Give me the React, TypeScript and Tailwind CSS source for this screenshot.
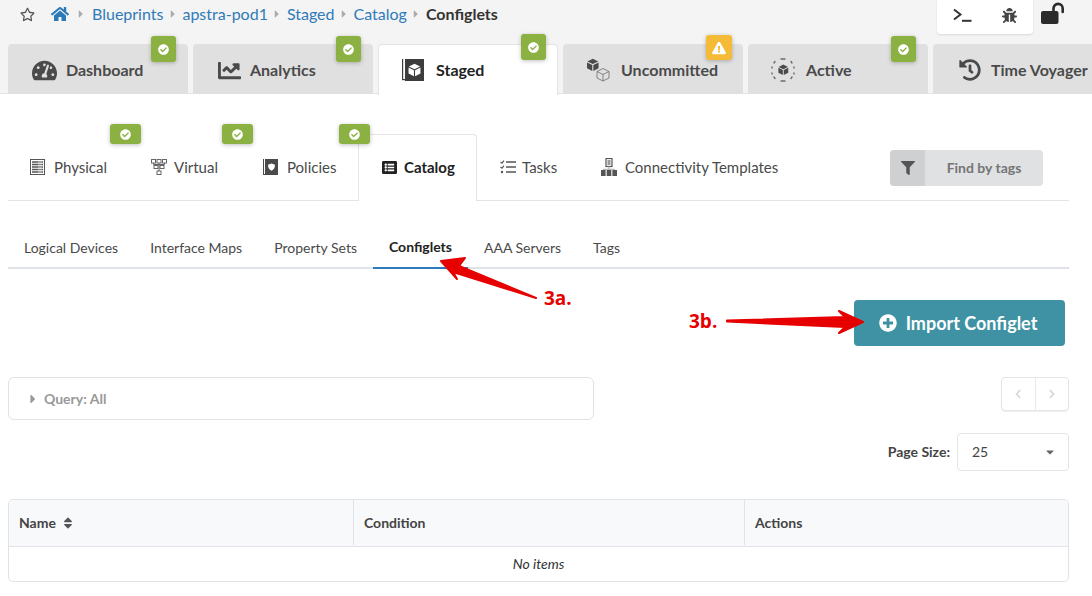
import type { ReactNode } from "react";
import {
  FaBug,
  FaCaretDown,
  FaCaretRight,
  FaChartLine,
  FaCheckCircle,
  FaChevronLeft,
  FaChevronRight,
  FaExclamationTriangle,
  FaFilter,
  FaHistory,
  FaHome,
  FaListAlt,
  FaPlusCircle,
  FaRegStar,
  FaSort,
  FaTachometerAlt,
} from "react-icons/fa";

function CubeGlyph({ x, y, s, fill = "currentColor" }: { x: number; y: number; s: number; fill?: string }) {
  return (
    <g transform={`translate(${x} ${y}) scale(${s})`}>
      <path d="M10 1 18 5 10 9 2 5Z" fill={fill} />
      <path d="M1.5 6.5 9.2 10.4V19L1.5 15Z" fill={fill} />
      <path d="M18.5 6.5 10.8 10.4V19L18.5 15Z" fill={fill} />
    </g>
  );
}

function StagedIcon() {
  return (
    <svg viewBox="0 0 22 22" className="h-[22px] w-[22px] text-[#3d3d3d]">
      <rect x="0" y="0" width="1.2" height="21" fill="currentColor" />
      <rect x="0" y="20" width="4" height="1.2" fill="currentColor" />
      <rect x="3" y="0" width="19" height="22" fill="currentColor" />
      <CubeGlyph x={5.5} y={4} s={0.7} fill="#ffffff" />
    </svg>
  );
}

function UncommittedIcon() {
  return (
    <svg viewBox="0 0 24 24" className="h-[24px] w-[24px] text-[#4a4a4a]">
      <CubeGlyph x={0} y={0} s={0.68} />
      <g fill="none" stroke="#6b6b6b" strokeWidth="0.8">
        <path d="M17 10.5 23 13.5 17 16.5 11 13.5Z" />
        <path d="M11 13.5V20L17 23 23 20V13.5M17 16.5V23" />
      </g>
    </svg>
  );
}

function ActiveIcon() {
  return (
    <svg viewBox="0 0 24 24" className="h-[24px] w-[24px] text-[#4a4a4a]">
      <CubeGlyph x={6.5} y={6} s={0.58} />
      <g fill="none" stroke="#6b6b6b" strokeWidth="1.4" strokeLinecap="round">
        <path d="M10 1h4M10 23h4M1 9v1M23 9v1M1 15v1M23 15v1M4 3.5 3 5M20 3.5l1 1.5M4 20.5 3 19M20 20.5l1-1.5" />
      </g>
    </svg>
  );
}

function PhysicalIcon() {
  return (
    <svg viewBox="0 0 15 16" className="h-[16px] w-[15px] text-[#555]">
      <rect x="0.5" y="0.5" width="14" height="15" fill="none" stroke="currentColor" />
      <path d="M2 3h11M2 5.5h11M2 8h11M2 10.5h11M2 13h11" stroke="currentColor" strokeWidth="1.3" />
      <path d="M9 2v12M11 2v12" stroke="#fff" strokeWidth="0.6" />
    </svg>
  );
}

function VirtualIcon() {
  return (
    <svg viewBox="0 0 16 16" className="h-[16px] w-[16px] text-[#666]" fill="none" stroke="currentColor" strokeWidth="1">
      <rect x="0.5" y="0.5" width="4" height="3.5" />
      <rect x="6" y="0.5" width="4" height="3.5" />
      <rect x="11.5" y="0.5" width="4" height="3.5" />
      <rect x="3" y="6.5" width="4" height="3" />
      <rect x="9" y="6.5" width="4" height="3" />
      <rect x="6" y="12" width="4" height="3.5" />
      <path d="M2.5 4v1.5h11V4M8 4v8M5 5.5v1M11 5.5v1" />
    </svg>
  );
}

function PoliciesIcon() {
  return (
    <svg viewBox="0 0 15 16" className="h-[16px] w-[15px] text-[#4a4a4a]">
      <rect x="0" y="0" width="1" height="15" fill="currentColor" />
      <rect x="0" y="15" width="3" height="1" fill="currentColor" />
      <rect x="2" y="0" width="13" height="16" fill="currentColor" />
      <path d="M8.5 4.5 12 5.8c0 3-1.2 5-3.5 6-2.3-1-3.5-3-3.5-6Z" fill="#fff" />
    </svg>
  );
}

function TasksIcon() {
  return (
    <svg viewBox="0 0 16 14" className="h-[14px] w-[16px] text-[#555]" fill="none" stroke="currentColor">
      <path d="M6 2h10M6 7h10M6 12h10" strokeWidth="1.5" />
      <path d="M.5 2 2 3.2 4 .6M.5 7 2 8.2 4 5.6" strokeWidth="1.1" />
      <circle cx="2" cy="12" r="1.2" fill="currentColor" stroke="none" />
    </svg>
  );
}

function TemplatesIcon() {
  return (
    <svg viewBox="0 0 16 18" className="h-[18px] w-[16px] text-[#555]">
      <rect x="5" y="0.5" width="6" height="8" fill="none" stroke="currentColor" strokeWidth="1.2" />
      <rect x="6.5" y="2" width="3" height="5" fill="#999" />
      <path d="M8 8.5v3M2.5 12.5v-1.2h11v1.2" fill="none" stroke="#aaa" strokeWidth="1" />
      <rect x="0" y="12" width="4.6" height="6" fill="currentColor" />
      <rect x="5.7" y="12" width="4.6" height="6" fill="currentColor" />
      <rect x="11.4" y="12" width="4.6" height="6" fill="currentColor" />
    </svg>
  );
}

function TerminalIcon() {
  return (
    <svg viewBox="0 0 19 14" className="h-[14px] w-[19px] text-[#333]" fill="none" stroke="currentColor" strokeWidth="2">
      <path d="M1 1.5 7.5 6.5 1 11.5" />
      <path d="M9 12.8h9.5" />
    </svg>
  );
}

function LockIcon() {
  return (
    <svg viewBox="0 0 24 22" className="h-[22px] w-[24px] text-[#2b2b2b]">
      <rect x="0" y="9" width="17.5" height="13" rx="2" fill="currentColor" />
      <path d="M12.5 10V6.5a4.6 4.6 0 0 1 9.2 0V10" fill="none" stroke="currentColor" strokeWidth="2.6" strokeLinecap="round" />
    </svg>
  );
}

function Badge({ warn, className }: { warn?: boolean; className: string }) {
  return (
    <span
      className={`absolute flex items-center justify-center rounded-[3px] shadow-[0_1px_4px_rgba(0,0,0,0.25)] ${
        warn ? "bg-[#f5bb36]" : "bg-[#8bb143]"
      } ${className}`}
    >
      {warn ? <FaExclamationTriangle className="text-[14px] text-white" /> : <FaCheckCircle className="text-[11px] text-white" />}
    </span>
  );
}

function MainTab({ label, icon, active, gap, pad }: { label: string; icon: ReactNode; active?: boolean; gap: string; pad: string }) {
  return (
    <div
      className={`flex w-[180px] shrink-0 items-center rounded-t-[4px] text-[16px] font-bold ${gap} ${pad} ${
        active ? "relative z-10 -mb-px h-[51px] border border-b-0 border-[#e2e4ea] bg-white text-[#222]" : "h-[50px] bg-[#e0e0e0] pt-[2px] text-[#4a4a4a]"
      }`}
    >
      {icon}
      <span className="whitespace-nowrap">{label}</span>
    </div>
  );
}

function SecondTab({ label, icon, className }: { label: string; icon: ReactNode; className: string }) {
  return (
    <div className={`flex items-center text-[15px] text-[#4a4a4a] ${className}`}>
      {icon}
      <span>{label}</span>
    </div>
  );
}

const subTabs = ["Logical Devices", "Interface Maps", "Property Sets", "Configlets", "AAA Servers", "Tags"];
const crumbs = ["Blueprints", "apstra-pod1", "Staged", "Catalog"];

export default function App() {
  return (
    <div className="relative h-[596px] w-[1092px] overflow-hidden bg-white font-['Lato','Liberation_Sans',sans-serif] text-[#333]">
      <header className="relative h-[94px] border-b border-[#e2e4ea] bg-[#f4f4f4]">
        <div className="flex h-[33px] items-start justify-between pl-[20px]">
          <nav className="flex h-[28px] items-center text-[16px]">
            <FaRegStar className="text-[15px] text-[#555]" />
            <FaHome className="ml-[16px] text-[18px] text-[#2a79b8]" />
            <FaCaretRight className="ml-[6px] mr-[5px] text-[12px] text-[#aaa]" />
            {crumbs.map((crumb) => (
              <span key={crumb} className="flex items-center">
                <span className="text-[#2f7ab9]">{crumb}</span>
                <FaCaretRight className="mx-[3.5px] text-[12px] text-[#aaa]" />
              </span>
            ))}
            <span className="font-bold text-[#333]">Configlets</span>
          </nav>
          <div className="mr-[27px] flex items-center">
            <div className="flex h-[34px] w-[96px] items-center justify-between rounded-b-[4px] bg-white px-[16px] pb-[4px] shadow-[0_1px_2px_rgba(0,0,0,0.12)]">
              <TerminalIcon />
              <FaBug className="text-[15px] text-[#444]" />
            </div>
            <div className="mb-[9px] ml-[8px]">
              <LockIcon />
            </div>
          </div>
        </div>
        <div className="mt-[11px] flex gap-[5px] pl-[8px]">
          <MainTab label="Dashboard" gap="gap-[9px]" pad="pl-[24px]" icon={<FaTachometerAlt className="text-[25px] text-[#4a4a4a]" />} />
          <MainTab label="Analytics" gap="gap-[9px]" pad="pl-[25px]" icon={<FaChartLine className="text-[23px] text-[#4a4a4a]" />} />
          <MainTab label="Staged" active gap="gap-[12px]" pad="pl-[23px]" icon={<StagedIcon />} />
          <MainTab label="Uncommitted" gap="gap-[11px]" pad="pl-[23px]" icon={<UncommittedIcon />} />
          <MainTab label="Active" gap="gap-[11px]" pad="pl-[23px]" icon={<ActiveIcon />} />
          <MainTab label="Time Voyager" gap="gap-[10px]" pad="pl-[26px]" icon={<FaHistory className="text-[22px] text-[#4a4a4a]" />} />
        </div>
        <Badge className="left-[151px] top-[36px] h-[26px] w-[25px]" />
        <Badge className="left-[336px] top-[36px] h-[26px] w-[25px]" />
        <Badge className="left-[521px] top-[34px] z-20 h-[26px] w-[25px]" />
        <Badge warn className="left-[706px] top-[35px] h-[25px] w-[26px]" />
        <Badge className="left-[891px] top-[36px] h-[26px] w-[25px]" />
      </header>

      <section className="relative mx-[8px] mr-[23px] mt-[40px] flex h-[67px] items-center border-b border-[#e2e4ea]">
        <SecondTab label="Physical" icon={<PhysicalIcon />} className="ml-[22px] w-[121px] gap-[9px]" />
        <SecondTab label="Virtual" icon={<VirtualIcon />} className="w-[112px] gap-[7px]" />
        <SecondTab label="Policies" icon={<PoliciesIcon />} className="w-[95px] gap-[9px]" />
        <div className="-mb-px flex h-[67px] w-[119px] items-center gap-[7px] rounded-t-[4px] border border-b-0 border-[#e2e4ea] bg-white pb-[1px] pl-[23px] text-[15px] font-bold text-[#222]">
          <FaListAlt className="text-[15px] text-[#222]" />
          <span>Catalog</span>
        </div>
        <SecondTab label="Tasks" icon={<TasksIcon />} className="ml-[23px] w-[101px] gap-[6px]" />
        <SecondTab label="Connectivity Templates" icon={<TemplatesIcon />} className="gap-[8px]" />
        <div className="absolute left-[882px] top-[16px] flex h-[36px] w-[153px] overflow-hidden rounded-[4px] bg-[#e0e1e3] text-[14px] font-bold text-[#757575]">
          <div className="flex w-[35px] items-center justify-center bg-[#cfd0d2]">
            <FaFilter className="text-[14px] text-[#555]" />
          </div>
          <div className="flex flex-1 items-center justify-center pb-[1px]">Find by tags</div>
        </div>
        <Badge className="left-[102px] top-[-10px] h-[20px] w-[31px]" />
        <Badge className="left-[214px] top-[-10px] h-[20px] w-[31px]" />
        <Badge className="left-[331px] top-[-10px] h-[20px] w-[31px]" />
      </section>

      <nav className="mx-[8px] mr-[23px] mt-[27px] flex h-[41px] border-b-2 border-[#dfe2e7] text-[14px] text-[#4a4a4a]">
        {subTabs.map((tab) => (
          <div
            key={tab}
            className={`-mb-[2px] flex items-center px-[16px] pb-[2px] ${tab === "Configlets" ? "border-b-2 border-[#2f7ab9] font-bold text-[#222]" : ""}`}
          >
            {tab}
          </div>
        ))}
      </nav>

      <div className="mr-[27px] mt-[31px] flex justify-end">
        <button className="flex h-[46px] w-[211px] items-center justify-center gap-[9px] rounded-[4px] bg-[#3e92a3] pr-[3px] text-[18px] font-bold text-white">
          <FaPlusCircle className="text-[18px]" />
          Import Configlet
        </button>
      </div>

      <div className="mx-[8px] mr-[23px] mt-[31px] flex items-start justify-between">
        <div className="flex h-[43px] w-[586px] items-center rounded-[6px] border border-[#e0e2e8] pl-[17px] text-[14px] font-bold text-[#999]">
          <FaCaretRight className="mr-[4px] text-[14px] text-[#999]" />
          Query: All
        </div>
        <div className="flex h-[34px] w-[68px] rounded-[4px] border border-[#e2e4ea] shadow-[0_1px_1px_rgba(0,0,0,0.06)]">
          <div className="flex flex-1 items-center justify-center border-r border-[#e8e9ed]">
            <FaChevronLeft className="text-[10px] text-[#d5d7dc]" />
          </div>
          <div className="flex flex-1 items-center justify-center">
            <FaChevronRight className="text-[10px] text-[#d5d7dc]" />
          </div>
        </div>
      </div>

      <div className="mr-[23px] mt-[13px] flex items-center justify-end gap-[7px]">
        <span className="pb-[1px] text-[14px] font-bold text-[#444]">Page Size:</span>
        <div className="flex h-[38px] w-[112px] items-center justify-between rounded-[4px] border border-[#e2e4ea] pb-[1px] pl-[14px] pr-[12px] text-[14px] text-[#444]">
          25
          <FaCaretDown className="text-[12px] text-[#666]" />
        </div>
      </div>

      <div className="mx-[8px] mr-[23px] mt-[28px] overflow-hidden rounded-[5px] border border-[#e0e2e8] text-[14px]">
        <div className="flex h-[47px] border-b border-[#e0e2e8] bg-[#f8f9fb] pb-[1px] font-bold text-[#444]">
          <div className="flex w-[345px] items-center gap-[5px] border-r border-[#e0e2e8] pl-[10px]">
            Name
            <FaSort className="text-[14px] text-[#555]" />
          </div>
          <div className="flex w-[391px] items-center border-r border-[#e0e2e8] pl-[10px]">Condition</div>
          <div className="flex flex-1 items-center pl-[10px]">Actions</div>
        </div>
        <div className="flex h-[34px] items-center justify-center pb-[1px] italic text-[#333]">No items</div>
      </div>

      <svg viewBox="0 0 1092 596" className="pointer-events-none absolute left-0 top-0 h-[596px] w-[1092px]">
        <g fill="#e60000" stroke="#e60000" strokeLinejoin="round">
          <path d="M441 261 465 258 459 266 536 298 453 272 457 279Z" strokeWidth="2" />
          <path d="M727 320.5 845 317 839 311 863 322 839 333 845 327 727 321.5Z" strokeWidth="2" />
        </g>
      </svg>
      <span className="absolute left-[544px] top-[286px] font-['Open_Sans',sans-serif] text-[19px] font-bold leading-[24px] text-[#e60000]">3a.</span>
      <span className="absolute left-[689px] top-[309px] font-['Open_Sans',sans-serif] text-[19px] font-bold leading-[24px] text-[#e60000]">3b.</span>
    </div>
  );
}
